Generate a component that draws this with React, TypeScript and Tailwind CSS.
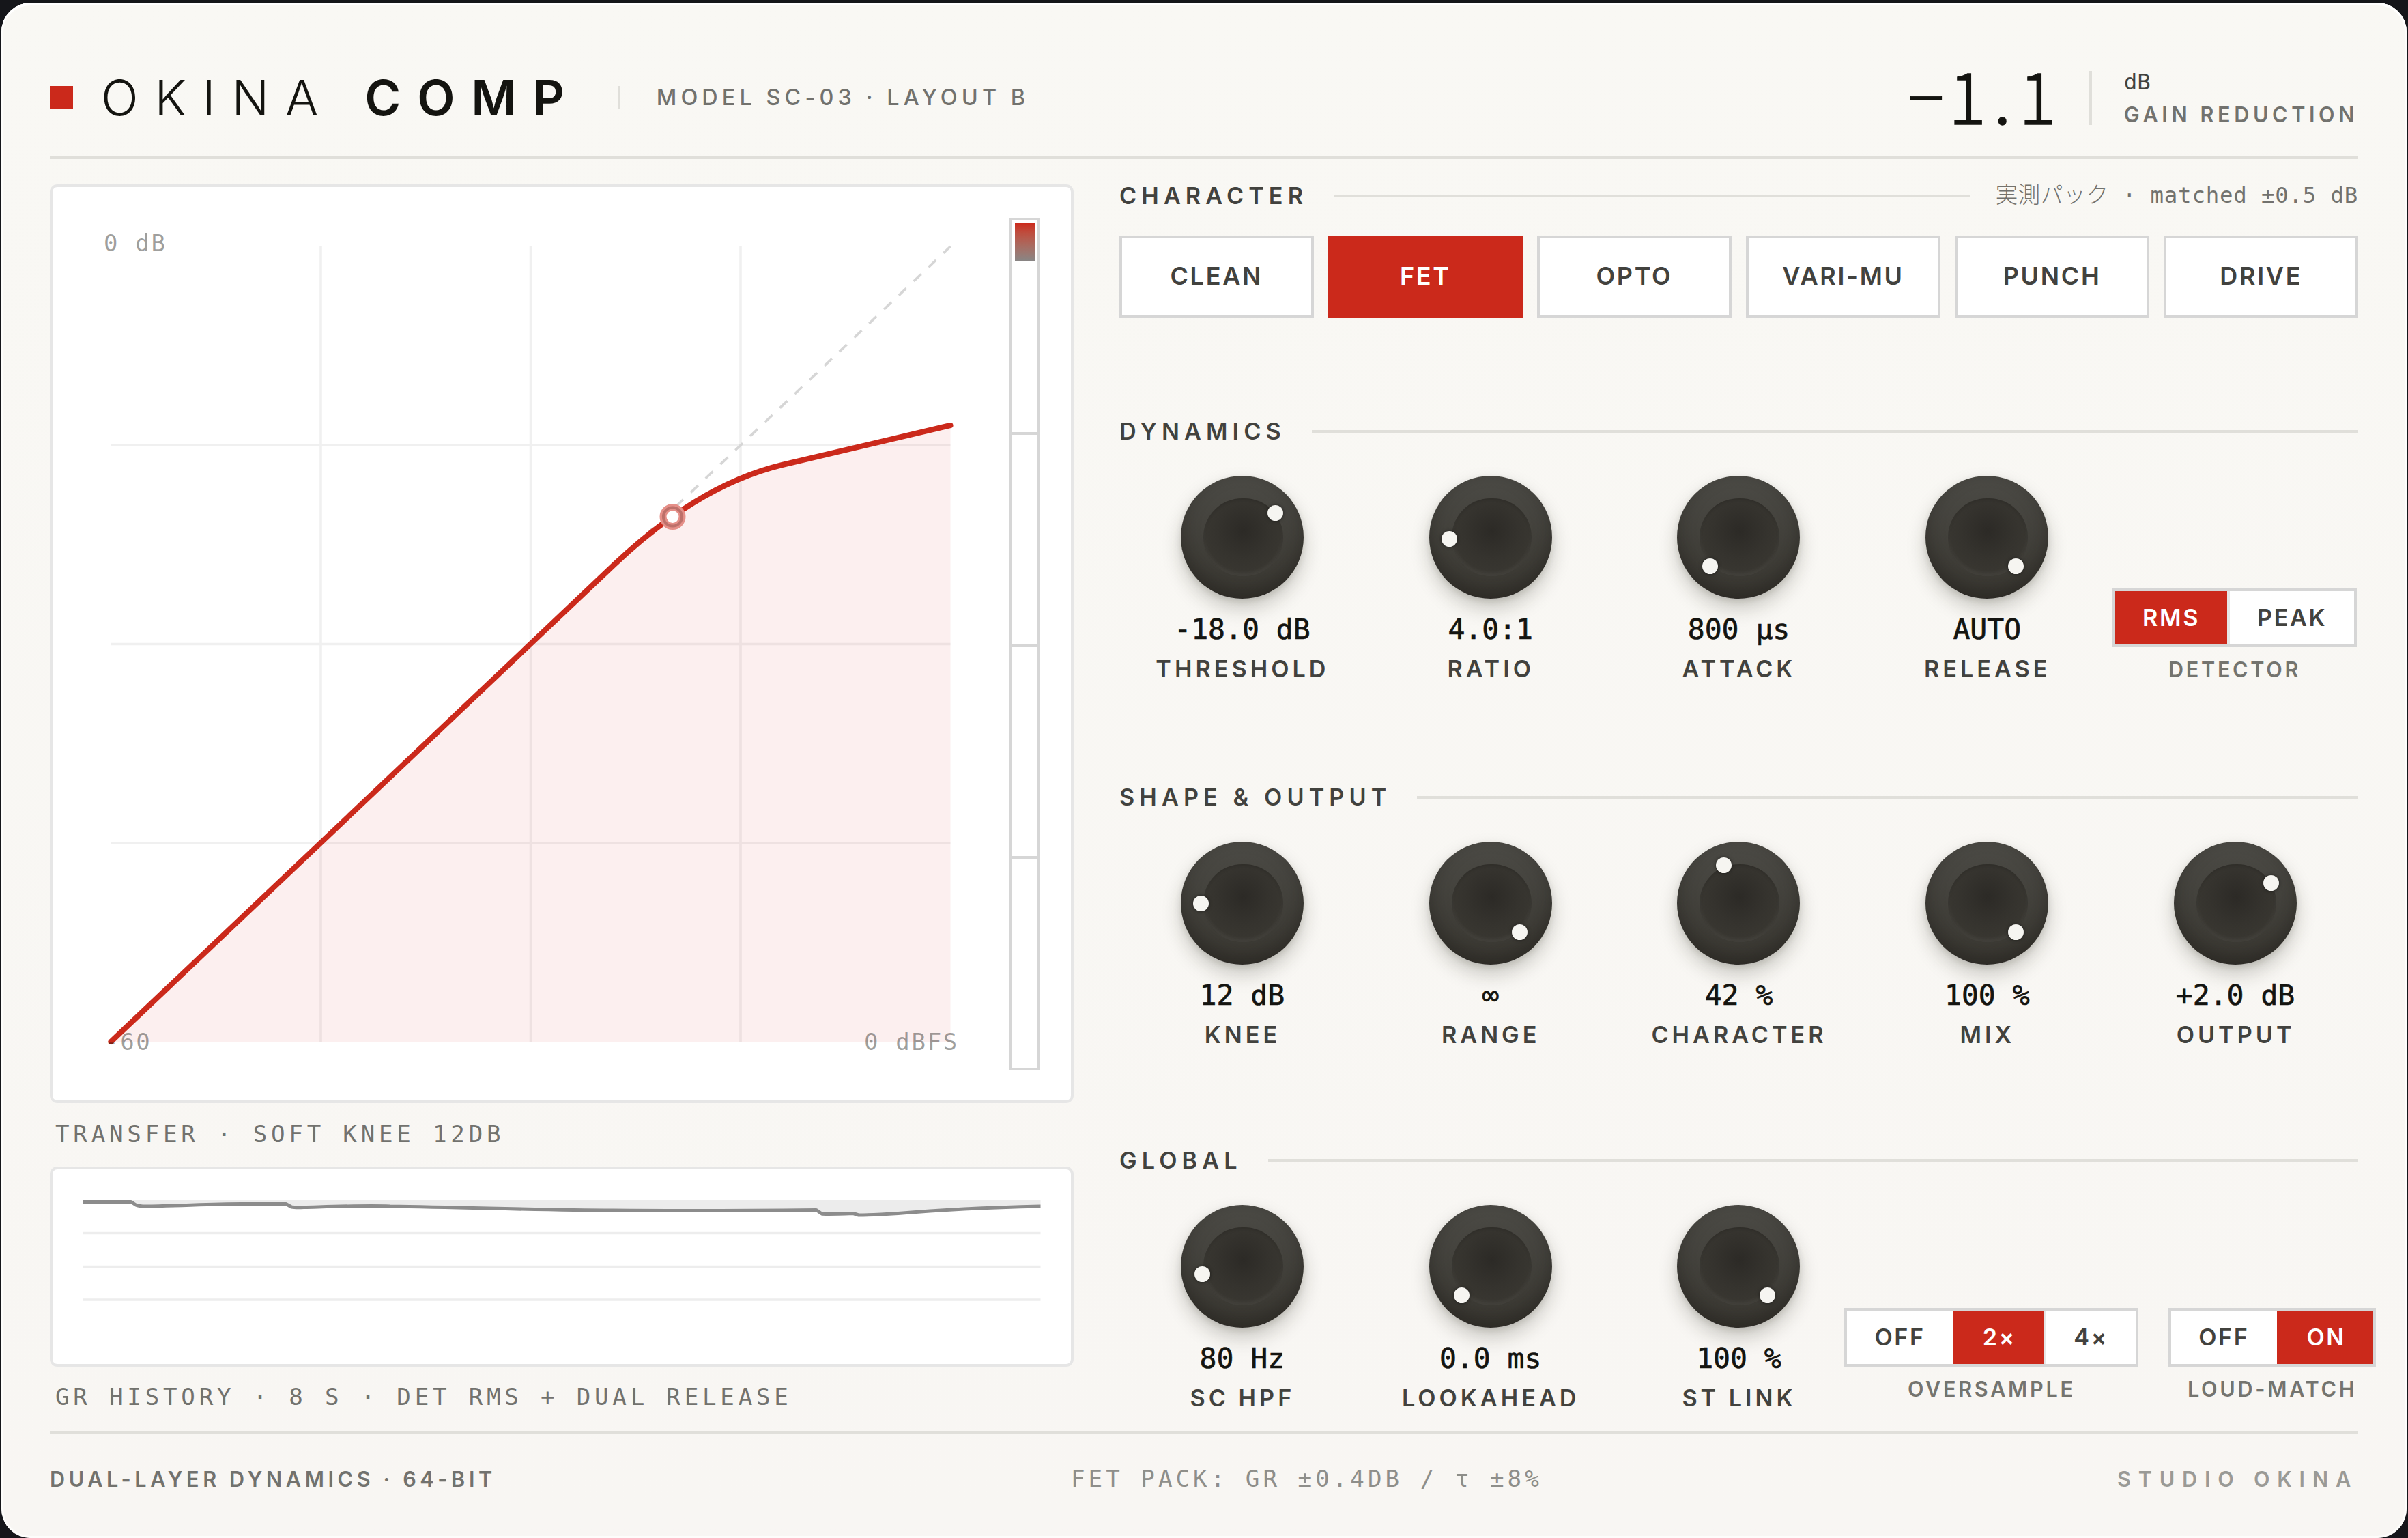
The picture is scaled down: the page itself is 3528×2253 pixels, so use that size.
import type { ReactNode } from 'react'

const SANS = "font-['Inter','Liberation_Sans',sans-serif]"
const MONO = "font-['DejaVu_Sans_Mono','Noto_Sans_CJK_JP',monospace]"

type KnobProps = { label: string; value: string; angle: number }

const characters = ['CLEAN', 'FET', 'OPTO', 'VARI-MU', 'PUNCH', 'DRIVE']

const dynamics: KnobProps[] = [
  { label: 'THRESHOLD', value: '-18.0 dB', angle: 53.8 },
  { label: 'RATIO', value: '4.0:1', angle: -92 },
  { label: 'ATTACK', value: '800 µs', angle: -135 },
  { label: 'RELEASE', value: 'AUTO', angle: 135 },
]

const shape: KnobProps[] = [
  { label: 'KNEE', value: '12 dB', angle: -90 },
  { label: 'RANGE', value: '∞', angle: 135 },
  { label: 'CHARACTER', value: '42 %', angle: -21.6 },
  { label: 'MIX', value: '100 %', angle: 135 },
  { label: 'OUTPUT', value: '+2.0 dB', angle: 60 },
]

const global: KnobProps[] = [
  { label: 'SC HPF', value: '80 Hz', angle: -101.3 },
  { label: 'LOOKAHEAD', value: '0.0 ms', angle: -135 },
  { label: 'ST LINK', value: '100 %', angle: 135 },
]

function Knob({ label, value, angle }: KnobProps) {
  const rad = (angle * Math.PI) / 180
  return (
    <div className="flex flex-col items-center whitespace-nowrap">
      <div className="relative size-[180px] rounded-full bg-linear-to-b from-[#4b4a45] to-[#3a3832] shadow-[0_14px_28px_rgba(30,30,20,0.22),0_4px_10px_rgba(30,30,20,0.12),inset_0_-12px_26px_rgba(20,18,14,0.36)]">
        <div className="absolute left-[33px] top-[33px] h-[114px] w-[117px] rounded-full bg-[radial-gradient(circle_at_50%_42%,#2c2a26_0%,#35332e_45%,#3a3832_80%)] shadow-[inset_0_-4px_6px_rgba(255,255,255,0.06),inset_0_2px_4px_rgba(0,0,0,0.15)]" />
        <div
          className="absolute size-[23px] rounded-full bg-[#f6f5f1] shadow-[0_0_5px_rgba(0,0,0,0.5)]"
          style={{ left: 90 + 60 * Math.sin(rad) - 11.5, top: 90 - 60 * Math.cos(rad) - 11.5 }}
        />
      </div>
      <div
        className={`${MONO} mt-[17px] h-[56px] text-[41.4px] leading-[56px] text-[#141410] [-webkit-text-stroke:0.7px_#141410]`}
      >
        {value}
      </div>
      <div className="h-[60px] pl-px text-[34.2px] font-semibold leading-[60px] tracking-[5px] text-[#42423e]">
        {label}
      </div>
    </div>
  )
}

function Section({ title, note, children }: { title: string; note?: ReactNode; children: ReactNode }) {
  return (
    <section>
      <div className="flex h-[48px] items-center whitespace-nowrap">
        <h2 className="text-[34.2px] font-semibold leading-[48px] tracking-[7.1px] text-[#42423e]">{title}</h2>
        <div className="ml-[38px] h-1 grow bg-[#e0dfda]" />
        {note}
      </div>
      {children}
    </section>
  )
}

function Toggle({ options, active, label }: { options: string[]; active: string; label: string }) {
  return (
    <div className="flex flex-col items-center whitespace-nowrap">
      <div className="flex h-[86px] border-4 border-[#d6d6d6] bg-white">
        {options.map((option, i) => (
          <button
            key={option}
            className={`px-[40px] text-[34.2px] font-semibold tracking-[2.6px] ${i > 0 ? 'border-l-4' : ''} ${
              option === active ? 'border-[#cb291b] bg-[#cb291b] text-white' : 'border-[#e6e6e6] text-[#42423e]'
            }`}
          >
            {option}
          </button>
        ))}
      </div>
      <div className="mt-[9px] h-[48px] text-[30.6px] font-semibold leading-[48px] tracking-[3.7px] text-[#74746f]">
        {label}
      </div>
    </div>
  )
}

function TransferGraph() {
  return (
    <svg viewBox="0 0 1492 1338" className={`${MONO} block h-[1338px] w-[1492px]`}>
      <g transform="translate(-77 -274)">
        <path
          d="M162.5 652H1392.5M162.5 943.5H1392.5M162.5 1235H1392.5M470 361V1526M777.5 361V1526M1085 361V1526"
          stroke="#f0f0f0"
          strokeWidth="3.6"
        />
        <path d="M162.5 1526L1392.5 361" stroke="#d6d6d6" strokeWidth="3.6" strokeDasharray="15 15" />
        <path
          d="M162.5 1526L900 827Q1023 710.5 1146 681L1392.5 623V1526Z"
          fill="#d02020"
          fillOpacity="0.072"
        />
        <path
          d="M162.5 1526L900 827Q1023 710.5 1146 681L1392.5 623"
          fill="none"
          stroke="#cb291b"
          strokeWidth="8"
          strokeLinecap="round"
          strokeLinejoin="round"
        />
        <g fill="#141410" fillOpacity="0.42" fontSize="34" letterSpacing="2.7">
          <text x="152" y="368">0 dB</text>
          <text x="153" y="1538">-60</text>
          <text x="1266" y="1538">0 dBFS</text>
        </g>
        <circle cx="985.5" cy="757" r="14" fill="#fff" stroke="#e58f88" strokeWidth="10" />
        <circle cx="985.5" cy="757" r="13.6" fill="none" stroke="#bd706a" strokeWidth="4" />
      </g>
    </svg>
  )
}

function HistoryGraph() {
  const line =
    'M121.5 1761.5H192L199 1766Q203 1768 214 1768C270 1767 320 1764 360 1764.5H419L427 1769Q432 1770 445 1769.5C500 1768 540 1766.5 571 1768C700 1770 800 1774 898 1774C1000 1775 1090 1774.5 1196 1773.5L1204 1779Q1208 1780 1250 1778.5L1258 1781Q1280 1781 1316 1778.5C1380 1773 1440 1770 1524.5 1768'
  return (
    <svg viewBox="0 0 1492 285" className="block h-[285px] w-[1492px]">
      <g transform="translate(-77 -1714)">
        <path d="M121.5 1807.5H1524.5M121.5 1856.5H1524.5M121.5 1905H1524.5" stroke="#ededed" strokeWidth="3.6" />
        <path d={`${line}V1759H121.5Z`} fill="#ececec" />
        <path d={line} fill="none" stroke="#8c8c8c" strokeWidth="5" strokeLinejoin="round" />
      </g>
    </svg>
  )
}

export default function App() {
  return (
    <div className={`${SANS} h-[2253px] w-[3528px] overflow-hidden bg-[#15161a] px-[2px] pt-1`}>
      <div className="flex h-[2249px] flex-col rounded-[43px] bg-linear-to-b from-[#f9f8f4] to-[#f8f6f3] px-[71px] shadow-[inset_0_4px_0_#ffffff,inset_0_0_0_3px_#fdfdfb]">
        <header className="flex h-[229px] items-center justify-between whitespace-nowrap border-b-4 border-[#e0dfda] pt-[53px]">
          <div className="flex items-center">
            <div className="size-[34px] bg-[#cb291b]" />
            <h1 className="ml-[41px] text-[72px] font-light leading-none tracking-[23.8px] text-[#141410]">
              OKINA <span className="font-semibold">COMP</span>
            </h1>
            <div className="ml-[54px] h-[34px] w-1 bg-[#e0dfda]" />
            <div className="ml-[53px] text-[32.4px] font-medium tracking-[6.1px] text-[#72726e]">
              MODEL SC-03 · LAYOUT B
            </div>
          </div>
          <div className="flex items-center">
            <div className="pb-[12px] font-['Noto_Sans_CJK_JP',sans-serif] text-[104px] font-light leading-[104px] tracking-[10.7px] text-[#141410] [-webkit-text-stroke:1.4px_#141410]">
              <span className="mr-[-4px] inline-block origin-right scale-x-95">−</span>1.1
            </div>
            <div className="ml-[37px] h-[79px] w-1 bg-[#e0dfda]" />
            <div className="ml-[47px] pt-[2px]">
              <div className={`${MONO} text-[32.4px] leading-[48px] text-[#42423e]`}>dB</div>
              <div className="text-[30.6px] font-semibold leading-[48px] tracking-[5.6px] text-[#72726e]">
                GAIN REDUCTION
              </div>
            </div>
          </div>
        </header>

        <main className="flex h-[1863px] justify-between">
          <div className={`${MONO} w-[1500px] text-[34.2px] tracking-[5.75px] text-[#72726e]`}>
            <div className="relative mt-[37px] h-[1346px] rounded-[11px] border-4 border-[#e6e6e6] bg-white tracking-normal">
              <TransferGraph />
              <div className="absolute left-[1402px] top-[45px] flex h-[1249px] w-[45px] flex-col border-4 border-[#d6d6d6] bg-white">
                <div className="h-1/4 p-1">
                  <div className="h-[56px] bg-linear-to-b from-[#cb291b] to-[#868686]" />
                </div>
                <div className="h-1/4 border-t-4 border-[#d6d6d6]" />
                <div className="h-1/4 border-t-4 border-[#d6d6d6]" />
                <div className="h-1/4 border-t-4 border-[#d6d6d6]" />
              </div>
            </div>
            <div className="mt-[21px] h-[48px] pl-2 leading-[48px]">TRANSFER · SOFT KNEE 12DB</div>
            <div className="mt-[24px] h-[293px] rounded-[11px] border-4 border-[#e6e6e6] bg-white">
              <HistoryGraph />
            </div>
            <div className="mt-[20px] h-[48px] pl-2 leading-[48px]">GR HISTORY · 8 S · DET RMS + DUAL RELEASE</div>
          </div>

          <div className="flex w-[1815px] flex-col pt-[30px]">
            <Section
              title="CHARACTER"
              note={
                <div className={`${MONO} ml-[38px] pb-[2px] text-[32.4px] font-light tracking-[0.8px] text-[#72726e]`}>
                  実測パック · matched ±0.5 dB
                </div>
              }
            >
              <div className="mt-[34px] grid grid-cols-6 gap-[21.6px]">
                {characters.map((name) => (
                  <button
                    key={name}
                    className={`h-[121px] border-4 pb-[4px] text-[36px] font-semibold tracking-[2.7px] ${
                      name === 'FET' ? 'border-[#cb291b] bg-[#cb291b] text-white' : 'border-[#d6d6d6] bg-white text-[#42423e]'
                    }`}
                  >
                    {name}
                  </button>
                ))}
              </div>
            </Section>

            <div className="mt-[142px]">
              <Section title="DYNAMICS">
                <div className="-mx-[2px] mt-[41px] grid grid-cols-5">
                  {dynamics.map((knob) => (
                    <Knob key={knob.label} {...knob} />
                  ))}
                  <div className="flex justify-center pr-[2px] pt-[165px]">
                    <Toggle options={['RMS', 'PEAK']} active="RMS" label="DETECTOR" />
                  </div>
                </div>
              </Section>
            </div>

            <div className="mt-[134px]">
              <Section title="SHAPE & OUTPUT">
                <div className="-mx-[2px] mt-[41px] grid grid-cols-5">
                  {shape.map((knob) => (
                    <Knob key={knob.label} {...knob} />
                  ))}
                </div>
              </Section>
            </div>

            <div className="mt-[130px]">
              <Section title="GLOBAL">
                <div className="-mx-[2px] mt-[41px] grid grid-cols-5">
                  {global.map((knob) => (
                    <Knob key={knob.label} {...knob} />
                  ))}
                  <div className="col-span-2 flex justify-center gap-[44px] pr-[3px] pt-[151px]">
                    <Toggle options={['OFF', '2×', '4×']} active="2×" label="OVERSAMPLE" />
                    <Toggle options={['OFF', 'ON']} active="ON" label="LOUD-MATCH" />
                  </div>
                </div>
              </Section>
            </div>
          </div>
        </main>

        <footer className="flex h-[144px] items-center justify-between whitespace-nowrap border-t-4 border-[#e0dfda] pb-[6px]">
          <div className="text-[30.6px] font-semibold tracking-[5.6px] text-[#72726e]">DUAL-LAYER DYNAMICS · 64-BIT</div>
          <div className={`${MONO} text-[34.2px] tracking-[5px] text-[#8e8e8a]`}>FET PACK: GR ±0.4DB / τ ±8%</div>
          <div className="text-[30.6px] font-semibold tracking-[10.8px] text-[#9a9a96]">STUDIO OKINA</div>
        </footer>
      </div>
    </div>
  )
}
